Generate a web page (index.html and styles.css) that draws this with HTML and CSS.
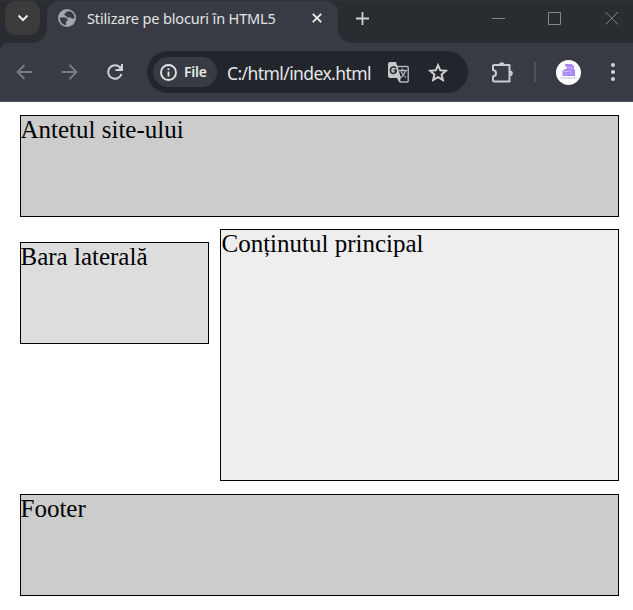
FILE: index.html
```html
<!DOCTYPE html>
<html lang="ro">
<head>
<meta charset="utf-8">
<title>Stilizare pe blocuri în HTML5</title>
<link rel="stylesheet" href="styles.css">
</head>
<body>
<div class="tabstrip">
  <button class="tab-search" aria-label="Tabs"><svg width="12" height="8" viewBox="0 0 12 8"><path d="M1.500 1.500 6 6l4.500-4.500" fill="none" stroke="#eee" stroke-width="2"/></svg></button>
  <div class="tab">
    <svg class="globe" width="18" height="18" viewBox="0 0 18 18"><circle cx="9" cy="9" r="9" fill="#a1a5ad"/><path d="M10.500 2.300Q8.500 2.200 8.300 3.500 6.500 3.500 6.500 5.200q0 1.800 2 1.800 0 1.500 1.500 1.500h2.500q1 1.500 3 1 .7 0 1-.8Q16 4 12 2.300zM1.800 8.500h4.500q3.200 0 3.200 2.500 0 1.500-1.500 1.500v3.800Q2.500 15.500 1.800 8.500z" fill="#393b44"/></svg>
    <span class="title">Stilizare pe blocuri în HTML5</span>
    <svg class="close" width="10" height="10" viewBox="0 0 10 10"><path d="M.8.8l8.400 8.400M9.200.8.8 9.200" stroke="#eee" stroke-width="1.900"/></svg>
  </div>
  <svg class="plus" width="13" height="13" viewBox="0 0 13 13"><path d="M6.500 0v13M0 6.500h13" stroke="#d2d2d2" stroke-width="1.800"/></svg>
  <svg class="window-controls" width="127" height="14" viewBox="0 0 127 14" fill="none" stroke="#858789"><path d="M0 7.500h13M56.500 1.500h12v12h-12zM113.500 1l12.500 12.500M126 1l-12.500 12.500"/></svg>
</div>
<div class="toolbar">
  <svg class="back" width="16" height="16" viewBox="0 0 16 16"><path d="M16 8H2M8.500 1 1.500 8l7 7" fill="none" stroke="#7b7b81" stroke-width="1.900"/></svg>
  <svg class="forward" width="16" height="16" viewBox="0 0 16 16"><path d="M0 8h14M7.500 1l7 7-7 7" fill="none" stroke="#7b7b81" stroke-width="1.900"/></svg>
  <svg class="reload" width="16" height="16" viewBox="0 0 16 16"><path d="M14.500 10A6.800 6.800 0 1 1 13 3.300" fill="none" stroke="#ced0d7" stroke-width="2"/><path d="M15 0v5.900H8.500" fill="none" stroke="#ced0d7" stroke-width="2"/><path d="M12 3.500 15 1v5h-3z" fill="#ced0d7"/></svg>
  <div class="omnibox">
    <div class="chip">
      <svg width="17" height="17" viewBox="0 0 17 17"><circle cx="8.500" cy="8.500" r="7.500" fill="none" stroke="#e4e4e4" stroke-width="1.900"/><path d="M8.500 4.200v1.900M8.500 7.500v5" stroke="#e4e4e4" stroke-width="1.800"/></svg>
      <span class="chip-label">File</span>
    </div>
    <span class="url">C:/html/index.html</span>
    <svg class="translate" width="21" height="21" viewBox="0 0 21 21"><path d="M9 4.500h10.200q1 0 1 1v13.500q0 1-1 1H12z" fill="none" stroke="#b5b7bb" stroke-width="1.400"/><path d="M11 8.500h8M14.500 6.500v2M17.500 8.500q-1 4.500-4.500 7M13 9.500q2 4 5 6" fill="none" stroke="#b5b7bb" stroke-width="1.300"/><path d="M2 0h6l5 16H2q-2 0-2-2V2q0-2 2-2z" fill="#c6c8cb"/><path d="M9 16h4l-2 4z" fill="#c6c8cb"/><path d="M8 6.200Q6.800 4.700 5 5 2.500 5.500 2.500 8q0 3.500 3.200 3.500Q8.300 11 8.300 8.300H5.500" fill="none" stroke="#30333a" stroke-width="1.700"/></svg>
    <svg class="star" width="20" height="19" viewBox="0 0 20 19"><path d="M10 2.200l2.250 5.100 5.600.5-4.250 3.700 1.250 5.400L10 14.100l-4.850 2.800 1.250-5.400L2.150 7.800l5.600-.5z" fill="none" stroke="#cfcfcf" stroke-width="2"/></svg>
  </div>
  <svg class="puzzle" width="21" height="21" viewBox="0 0 21 21"><path d="M2 3h15.500v16.500H2.500Q1 19.500 1 18v-3.500q3-.5 3-3.300T1 8V4q0-1 1-1z" fill="none" stroke="#c8cbd5" stroke-width="2" stroke-linejoin="round"/><path d="M7 3a2.800 2.800 0 0 1 5.600 0zM18 8.500a2.800 2.800 0 0 1 0 5.600z" fill="#c8cbd5"/></svg>
  <div class="divider"></div>
  <svg class="avatar" width="25" height="25" viewBox="0 0 25 25"><circle cx="12.500" cy="12.500" r="12.500" fill="#fff"/><path d="M9 4h6.500l2.500 2v3l1 1v6H6.500v-5.500L11 8.300V6.500H9z" fill="#aa87f5"/><path d="M12 7.500l5 1M7 11.800l8-1M9 14.200h2M13.500 13.500h3" stroke="#d4c4fc" stroke-width=".9"/><path d="M4.500 18h16" stroke="#a5a5d8" stroke-width=".9" stroke-dasharray="2 .5"/></svg>
  <svg class="menu" width="4" height="18" viewBox="0 0 4 18" fill="#d0d2da"><circle cx="2" cy="2" r="2"/><circle cx="2" cy="9" r="2"/><circle cx="2" cy="16" r="2"/></svg>
</div>
<main class="page">
  <header class="box header">Antetul site-ului</header>
  <div class="row">
    <aside class="box sidebar">Bara laterală</aside>
    <section class="box content">Conținutul principal</section>
  </div>
  <footer class="box footer">Footer</footer>
</main>
</body>
</html>
```
FILE: styles.css
```css
* { box-sizing: border-box; }
body {
  margin: 0;
  width: 633px;
  height: 610px;
  overflow: hidden;
  background: #fff;
}
svg { display: block; flex: none; }
.tabstrip {
  display: flex;
  height: 43px;
  background: #292c30;
  border-top: 1px solid #303238;
}
.tab-search {
  display: flex;
  align-items: center;
  justify-content: center;
  width: 35px;
  height: 34px;
  margin: 0 7px 0 5px;
  padding: 0;
  border: 0;
  border-radius: 11px;
  background: #3b3b3c;
}
.tab {
  position: relative;
  display: flex;
  width: 291px;
  height: 42px;
  background: #393b44;
  border-radius: 12px 12px 0 0;
}
.tab::before, .tab::after {
  content: "";
  position: absolute;
  bottom: 0;
  width: 14px;
  height: 14px;
}
.tab::before {
  left: -14px;
  background: radial-gradient(circle at 0 0, transparent 13.500px, #393b44 14px);
}
.tab::after {
  right: -14px;
  background: radial-gradient(circle at 100% 0, transparent 13.500px, #393b44 14px);
}
.globe { margin: 8px 0 0 11px; }
.title {
  width: 189px;
  margin: 7px 0 0 11px;
  font: 14.500px/20px "Noto Sans", sans-serif;
  letter-spacing: -0.150px;
  white-space: nowrap;
  color: #e3e3e5;
}
.close { margin: 12px 0 0 36px; }
.plus { margin: 11px 0 0 18px; }
.window-controls { margin: 10px 0 0 123px; }
.toolbar {
  display: flex;
  align-items: center;
  height: 59px;
  background: radial-gradient(circle at 9px 9px, #393b44 9px, #292c30 9.500px) 0 0 / 9px 9px no-repeat, #393b44;
  border-bottom: 1px solid #50515a;
}
.back { margin-left: 16px; }
.forward { margin-left: 30px; }
.reload { margin-left: 29px; }
.omnibox {
  display: flex;
  align-items: center;
  width: 321px;
  height: 42px;
  margin-left: 24px;
  padding-left: 6px;
  border-radius: 21px;
  background: #23252d;
}
.chip {
  display: flex;
  align-items: center;
  width: 64px;
  height: 30px;
  padding-left: 7px;
  border-radius: 15px;
  background: #393b44;
}
.chip-label {
  margin-left: 7px;
  font: 600 14px/20px "Noto Sans", sans-serif;
  letter-spacing: -0.200px;
  color: #e8e8e8;
}
.url {
  width: 145px;
  margin-left: 10px;
  padding-top: 2px;
  font: 17.500px/24px "Noto Sans", sans-serif;
  letter-spacing: -0.580px;
  white-space: nowrap;
  color: #e6e6e6;
}
.translate { margin-left: 16px; }
.star { margin-left: 19px; }
.puzzle { margin-left: 24px; }
.divider {
  width: 2px;
  height: 20px;
  margin-left: 21px;
  background: #50525c;
}
.avatar { margin-left: 20px; }
.menu { margin-left: 30px; }
.page {
  display: flex;
  flex-direction: column;
  gap: 12px;
  padding: 13px 14px 0 20px;
  font: 25px/28px "Liberation Serif", serif;
  color: #000;
}
.row { display: flex; gap: 11px; margin-bottom: 1px; }
.box { border: 1px solid #000; }
.header, .footer { height: 102px; background: #ccc; }
.header, .footer, .sidebar { text-indent: -0.500px; }
.sidebar { width: 189px; height: 102px; margin-top: 13px; background: #ddd; }
.content { width: 399px; height: 252px; background: #eee; text-indent: 0.500px; }
```
